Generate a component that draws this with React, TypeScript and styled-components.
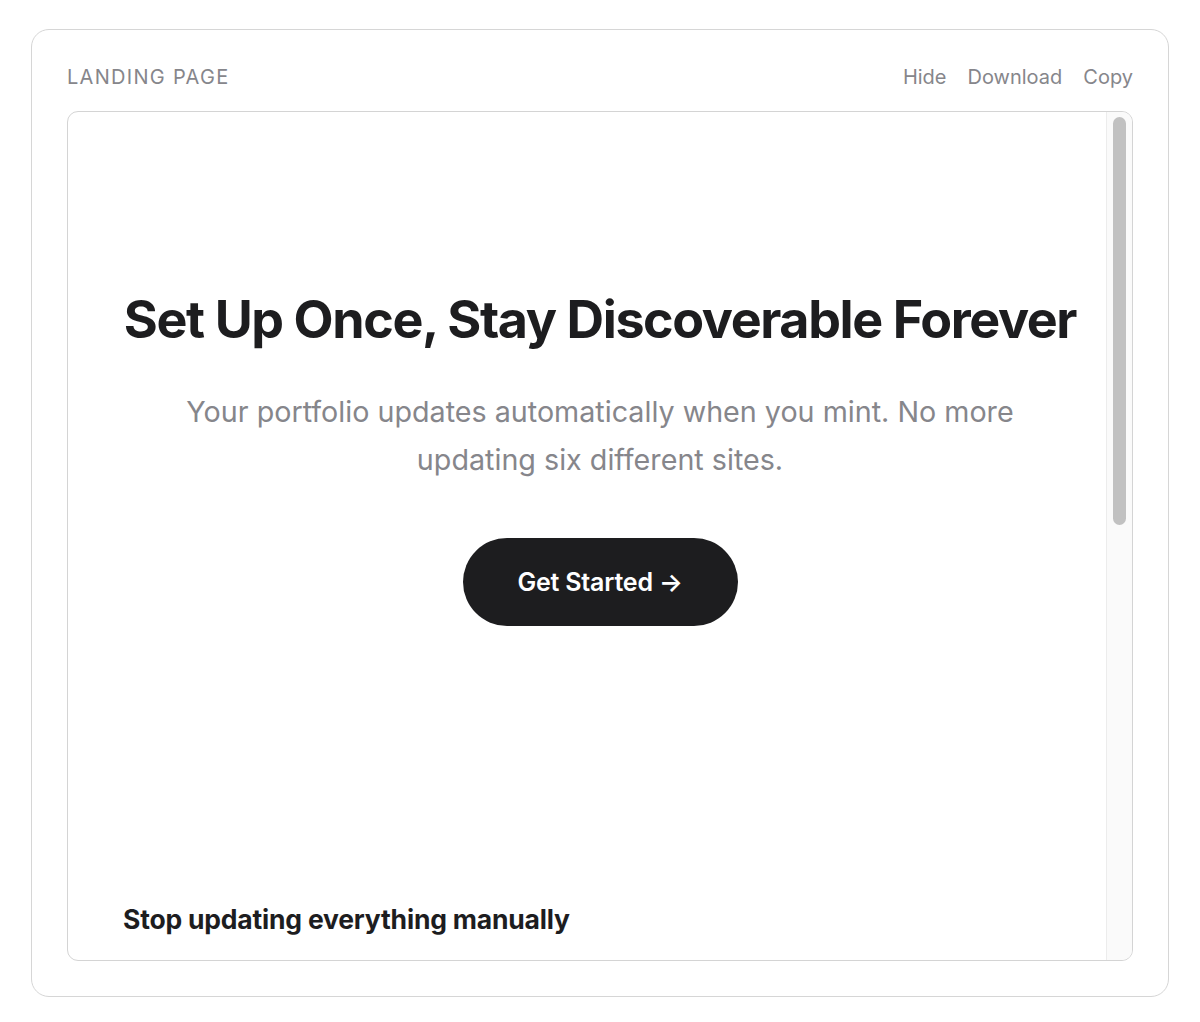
import React from "react";
import styled, { createGlobalStyle } from "styled-components";

const Global = createGlobalStyle`
  html, body { margin: 0; padding: 0; background: #ffffff; }
  body { font-family: Inter, "Noto Sans", "Liberation Sans", sans-serif; -webkit-font-smoothing: antialiased; }
  * { box-sizing: border-box; }
`;

const Page = styled.div`
  padding: 29px 31px 25px 31px;
`;

const Card = styled.section`
  height: 968px;
  border: 1px solid #d6d6d6;
  border-radius: 18px;
  padding: 35px 35px 35px 35px;
  display: flex;
  flex-direction: column;
  gap: 22px;
`;

const Header = styled.div`
  display: flex;
  align-items: center;
  justify-content: space-between;
  height: 24px;
`;

const Label = styled.span`
  font-size: 20px;
  letter-spacing: 1.3px;
  color: #86868b;
  text-transform: uppercase;
  line-height: 24px;
`;

const Actions = styled.div`
  display: flex;
  gap: 21px;
`;

const Action = styled.button`
  border: 0;
  background: none;
  padding: 0;
  font-family: inherit;
  font-size: 20px;
  line-height: 24px;
  color: #86868b;
  cursor: pointer;
`;

const Frame = styled.div`
  flex: 1;
  position: relative;
  border: 1px solid #d4d4d4;
  border-radius: 11px;
  overflow: hidden;
`;

const Viewport = styled.div`
  height: 100%;
  overflow: hidden;
`;

const Hero = styled.div`
  display: flex;
  flex-direction: column;
  align-items: center;
  text-align: center;
  padding: 177px 40px 0;
`;

const Title = styled.h1`
  margin: 0;
  font-size: 52px;
  line-height: 62px;
  font-weight: 700;
  letter-spacing: -1.4px;
  white-space: nowrap;
  color: #1d1d1f;
`;

const Subtitle = styled.p`
  margin: 37px 0 0;
  max-width: 880px;
  font-size: 28.7px;
  line-height: 48px;
  color: #86868b;
`;

const CTA = styled.button`
  margin-top: 54px;
  height: 88px;
  width: 275px;
  border: 0;
  border-radius: 44px;
  background: #1d1d1f;
  color: #ffffff;
  font-family: inherit;
  font-size: 25px;
  font-weight: 600;
  letter-spacing: -0.2px;
  cursor: pointer;
`;

const Section = styled.div`
  padding: 276px 55px 0;
`;

const SectionTitle = styled.h2`
  margin: 0;
  font-size: 26.5px;
  line-height: 34px;
  font-weight: 700;
  letter-spacing: -0.2px;
  color: #1d1d1f;
`;

const Track = styled.div`
  position: absolute;
  top: 0;
  right: 0;
  bottom: 0;
  width: 26px;
  background: #fafafa;
  border-left: 1px solid #ececec;
  padding: 5px 6px 0 6px;
`;

const Thumb = styled.div`
  width: 13px;
  border-radius: 7px;
  background: #c1c1c1;
`;

export default function App() {
  const thumbHeight = 408;
  return (
    <>
      <Global />
      <Page>
        <Card>
          <Header>
            <Label>Landing Page</Label>
            <Actions>
              <Action>Hide</Action>
              <Action>Download</Action>
              <Action>Copy</Action>
            </Actions>
          </Header>
          <Frame>
            <Viewport>
              <Hero>
                <Title>Set Up Once, Stay Discoverable Forever</Title>
                <Subtitle>
                  Your portfolio updates automatically when you mint. No more updating six different sites.
                </Subtitle>
                <CTA>Get Started →</CTA>
              </Hero>
              <Section>
                <SectionTitle>Stop updating everything manually</SectionTitle>
              </Section>
            </Viewport>
            <Track>
              <Thumb style={{ height: thumbHeight }} />
            </Track>
          </Frame>
        </Card>
      </Page>
    </>
  );
}
